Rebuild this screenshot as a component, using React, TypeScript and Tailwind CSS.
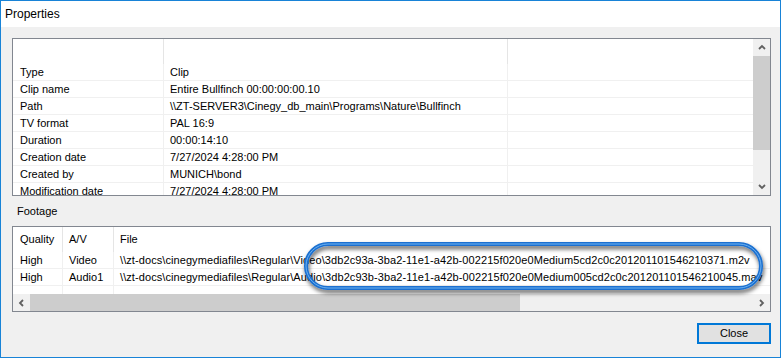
import React from "react";

const props: [string, string][] = [
  ["Type", "Clip"],
  ["Clip name", "Entire Bullfinch 00:00:00:00.10"],
  ["Path", "\\\\ZT-SERVER3\\Cinegy_db_main\\Programs\\Nature\\Bullfinch"],
  ["TV format", "PAL 16:9"],
  ["Duration", "00:00:14:10"],
  ["Creation date", "7/27/2024 4:28:00 PM"],
  ["Created by", "MUNICH\\bond"],
  ["Modification date", "7/27/2024 4:28:00 PM"],
];

const footage: [string, string, string][] = [
  [
    "High",
    "Video",
    "\\\\zt-docs\\cinegymediafiles\\Regular\\Video\\3db2c93a-3ba2-11e1-a42b-002215f020e0Medium5cd2c0c201201101546210371.m2v",
  ],
  [
    "High",
    "Audio1",
    "\\\\zt-docs\\cinegymediafiles\\Regular\\Audio\\3db2c93b-3ba2-11e1-a42b-002215f020e0Medium005cd2c0c201201101546210045.mav",
  ],
];

function Arrow({ dir }: { dir: "up" | "down" | "left" | "right" }) {
  const pts = {
    up: "1,5 4,2 7,5",
    down: "1,2 4,5 7,2",
    left: "5,1 2,4 5,7",
    right: "2,1 5,4 2,7",
  }[dir];
  return (
    <svg width="8" height="8" viewBox="0 0 8 8">
      <polyline points={pts} fill="none" stroke="#606060" strokeWidth="1.8" />
    </svg>
  );
}

function PropertiesList() {
  return (
    <div className="flex h-[158px] border border-[#828790] bg-white">
      <div className="flex w-[740px] flex-col overflow-hidden">
        <div className="flex h-[25px] shrink-0">
          <div className="w-[151px] border-r border-[#e5e5e5]" />
          <div className="w-[344px] border-r border-[#e5e5e5]" />
          <div className="flex-1" />
        </div>
        {props.map(([k, v]) => (
          <div key={k} className="flex h-[17px] shrink-0 border-b border-[#f0f0f0]">
            <div className="flex w-[151px] items-center border-r border-[#f0f0f0] pl-[7px]">{k}</div>
            <div className="flex w-[344px] items-center whitespace-nowrap border-r border-[#f0f0f0] pl-[6px]">{v}</div>
            <div className="flex-1" />
          </div>
        ))}
      </div>
      <div className="flex w-[17px] flex-col bg-[#f0f0f0]">
        <div className="flex h-[17px] items-center justify-center">
          <Arrow dir="up" />
        </div>
        <div className="h-[94px] bg-[#cdcdcd]" />
        <div className="flex-1" />
        <div className="flex h-[17px] items-center justify-center">
          <Arrow dir="down" />
        </div>
      </div>
    </div>
  );
}

function FootageList() {
  return (
    <div className="flex h-[86px] flex-col border border-[#828790] bg-white">
      <div className="flex flex-1 flex-col overflow-hidden">
        <div className="flex h-[25px] shrink-0">
          <div className="flex w-[50px] items-center border-r border-[#e5e5e5] pl-[7px]">Quality</div>
          <div className="flex w-[51px] items-center border-r border-[#e5e5e5] pl-[6px]">A/V</div>
          <div className="flex flex-1 items-center pl-[6px]">File</div>
        </div>
        {[...footage, ["", "", ""] as [string, string, string]].map(([q, av, f], i) => (
          <div key={i} className="flex h-[17px] shrink-0 border-b border-[#f0f0f0]">
            <div className="flex w-[50px] items-center border-r border-[#f0f0f0] pl-[7px]">{q}</div>
            <div className="flex w-[51px] items-center border-r border-[#f0f0f0] pl-[6px]">{av}</div>
            <div className="flex flex-1 items-center whitespace-nowrap pl-[6px] tracking-[0.08px]">{f}</div>
          </div>
        ))}
      </div>
      <div className="flex h-[17px] shrink-0 bg-[#f0f0f0]">
        <div className="flex w-[17px] items-center justify-center">
          <Arrow dir="left" />
        </div>
        <div className="w-[490px] bg-[#cdcdcd]" />
        <div className="flex-1" />
        <div className="flex w-[17px] items-center justify-center">
          <Arrow dir="right" />
        </div>
      </div>
    </div>
  );
}

export default function App() {
  return (
    <div className="relative h-[358px] w-[782px] bg-white font-['Liberation_Sans',Arial,sans-serif] text-[11px] text-black">
      <div className="flex h-[358px] w-[781px] flex-col border border-[#1883d7]">
        <div className="flex h-[26px] items-center bg-white pl-[4px] text-[12px]">Properties</div>
        <div className="flex flex-1 flex-col bg-[#f0f0f0] pl-[11px] pr-[9px] pt-[11px]">
          <PropertiesList />
          <div className="flex h-[30px] items-center pl-[5px]">Footage</div>
          <FootageList />
          <div className="mt-[11px] flex justify-end">
            <button
              type="button"
              className="flex h-[21px] w-[74px] items-center justify-center border-2 border-[#0078d7] bg-[#e1e1e1] text-[11px]"
            >
              Close
            </button>
          </div>
        </div>
      </div>

      {/* annotation highlight over the file names */}
      <svg className="pointer-events-none absolute left-[300px] top-[238px]" width="472" height="64" viewBox="0 0 472 64">
        <defs>
          <filter id="sh" x="-10%" y="-30%" width="120%" height="180%">
            <feDropShadow dx="1" dy="3" stdDeviation="2.2" floodColor="#000" floodOpacity="0.65" />
          </filter>
        </defs>
        <rect x="6" y="6" width="455" height="44" rx="22" fill="none" stroke="#1a6fd0" strokeWidth="4" filter="url(#sh)" />
        <rect x="6" y="6" width="455" height="44" rx="22" fill="none" stroke="#6cb2f2" strokeWidth="1" />
      </svg>
    </div>
  );
}
